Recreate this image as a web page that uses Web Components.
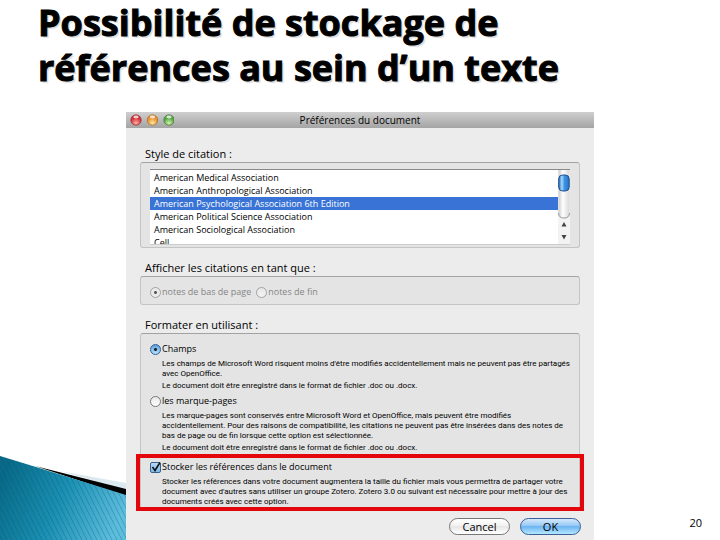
<!DOCTYPE html>
<html lang="fr">
<head>
<meta charset="utf-8">
<title>Possibilité de stockage de références</title>
<style>
  body {
    margin: 0;
    background: #fff;
    color: #000;
    font-family: "Open Sans", "Noto Sans", sans-serif;
  }
</style>
</head>
<body>
<slide-page number="20">
  <span slot="title">Possibilité de stockage de<br>références au sein d’un texte</span>
  <pref-window heading="Préférences du document">
    <pref-group heading="Style de citation :">
      <style-list></style-list>
    </pref-group>
    <pref-group heading="Afficher les citations en tant que :">
      <note-choice></note-choice>
    </pref-group>
    <pref-group heading="Formater en utilisant :">
      <pref-option type="radio" label="Champs" checked>
        <p>Les champs de Microsoft Word risquent moins d'être modifiés accidentellement mais ne peuvent pas être partagés<br>avec OpenOffice.</p>
        <p>Le document doit être enregistré dans le format de fichier .doc ou .docx.</p>
      </pref-option>
      <pref-option type="radio" label="les marque-pages">
        <p>Les marque-pages sont conservés entre Microsoft Word et OpenOffice, mais peuvent être modifiés<br>accidentellement. Pour des raisons de compatibilité, les citations ne peuvent pas être insérées dans des notes de<br>bas de page ou de fin lorsque cette option est sélectionnée.</p>
        <p>Le document doit être enregistré dans le format de fichier .doc ou .docx.</p>
      </pref-option>
      <pref-option type="checkbox" label="Stocker les références dans le document" checked framed>
        <p>Stocker les références dans votre document augmentera la taille du fichier mais vous permettra de partager votre<br>document avec d'autres sans utiliser un groupe Zotero. Zotero 3.0 ou suivant est nécessaire pour mettre à jour des<br>documents créés avec cette option.</p>
      </pref-option>
    </pref-group>
    <aqua-button slot="actions">Cancel</aqua-button>
    <aqua-button slot="actions" primary>OK</aqua-button>
  </pref-window>
</slide-page>

<script>
// look of the round and square tick controls, shared by several elements
const controlStyle = `
  input {
    appearance: none;
    flex: none;
    box-sizing: border-box;
    width: 11px;
    height: 11px;
    margin: 0;
    border: 1px solid #777;
    background: linear-gradient(#e8e8e8, #fff);
  }
  input[type="radio"] {
    border-radius: 50%;
  }
  input[type="radio"]:checked {
    border-color: #2b5f94;
    background: radial-gradient(circle, #123 0 1px, transparent 2px), linear-gradient(#5d9ddb, #b9e2fb);
  }
  input[type="checkbox"] {
    border-color: #37618c;
    border-radius: 2px;
    background: linear-gradient(#b8d8f5, #7db9ec);
  }
  input:disabled {
    opacity: 0.6;
  }
  input[type="radio"]:disabled:checked {
    border-color: #777;
    background: radial-gradient(circle, #000 0 1px, transparent 2px), #eee;
  }
`;

class SlidePage extends HTMLElement {
  constructor() {
    super();
    this.shadowDOM = this.attachShadow({ mode: "open" });
  }

  connectedCallback() {
    this.shadowDOM.innerHTML = `
      <style>
        :host {
          display: grid;
          grid-template-columns: minmax(0, 7fr) minmax(0, 26fr) minmax(0, 7fr);
          grid-template-rows: 112px 1fr;
          min-height: 100vh;
        }
        h1 {
          grid-column: 1 / -1;
          margin: 0;
          padding-left: 38px;
          font-size: 36px;
          line-height: 45px;
          font-weight: 700;
          white-space: nowrap;
          -webkit-text-stroke: 1px #000;
          text-shadow: 2px 2px 1px #ddd;
        }
        .wave {
          align-self: end;
          display: block;
          width: 100%;
        }
        footer {
          align-self: end;
          padding: 0 18px 9px 0;
          text-align: right;
          font-size: 11px;
          line-height: 16px;
        }
      </style>
      <h1><slot name="title"></slot></h1>
      <svg class="wave" viewBox="0 0 126 84" aria-hidden="true">
        <defs>
          <linearGradient id="sea" x1="0" y1="0.3" x2="1" y2="0.6">
            <stop offset="0" stop-color="#086a88"/>
            <stop offset="0.5" stop-color="#1a90b2"/>
            <stop offset="1" stop-color="#5dbddd"/>
          </linearGradient>
          <pattern id="lines" width="5" height="10" patternUnits="userSpaceOnUse">
            <path d="M0 0L5 10" stroke="#04506e" stroke-width="0.7" opacity="0.45"/>
          </pattern>
        </defs>
        <path d="M60 15L126 27V34Z" fill="#dceaf0"/>
        <path d="M35 10L126 33V40Z" fill="#000"/>
        <path d="M0 0L36 11L126 39V84H0Z" fill="url(#sea)"/>
        <path d="M0 0L36 11L126 39V84H0Z" fill="url(#lines)"/>
      </svg>
      <slot></slot>
      <footer>${this.getAttribute("number")}</footer>
    `;
  }
}

customElements.define("slide-page", SlidePage);

class PrefWindow extends HTMLElement {
  constructor() {
    super();
    this.shadowDOM = this.attachShadow({ mode: "open" });
  }

  connectedCallback() {
    this.shadowDOM.innerHTML = `
      <style>
        :host {
          display: block;
          background: #ececec;
        }
        header {
          display: grid;
          grid-template-columns: 48px 1fr 48px;
          align-items: center;
          height: 16px;
          background: linear-gradient(#cfcfcf, #a4a4a4);
        }
        .lights {
          display: block;
          width: 48px;
          height: 16px;
        }
        h2 {
          margin: 0;
          text-align: center;
          font-size: 10px;
          line-height: 16px;
          font-weight: 400;
        }
        .body {
          padding: 18px 14px 0;
        }
        .actions {
          display: flex;
          justify-content: flex-end;
          gap: 10px;
          padding: 7px 13px 5px;
        }
      </style>
      <header>
        <svg class="lights" viewBox="0 0 48 16" aria-hidden="true">
          <defs>
            <radialGradient id="red" cy="0.8"><stop offset="0" stop-color="#ffb0a8"/><stop offset="1" stop-color="#d5333a"/></radialGradient>
            <radialGradient id="amber" cy="0.8"><stop offset="0" stop-color="#ffe9a0"/><stop offset="1" stop-color="#ea9235"/></radialGradient>
            <radialGradient id="green" cy="0.8"><stop offset="0" stop-color="#d5f5b0"/><stop offset="1" stop-color="#56a545"/></radialGradient>
          </defs>
          <g stroke-width="0.8">
            <circle cx="10" cy="8" r="5.2" fill="url(#red)" stroke="#9c3438"/>
            <circle cx="26.5" cy="8" r="5.2" fill="url(#amber)" stroke="#a8702f"/>
            <circle cx="43" cy="8" r="5.2" fill="url(#green)" stroke="#4b7f40"/>
          </g>
          <g fill="#fff" opacity="0.75">
            <ellipse cx="10" cy="5" rx="2.6" ry="1.4"/>
            <ellipse cx="26.5" cy="5" rx="2.6" ry="1.4"/>
            <ellipse cx="43" cy="5" rx="2.6" ry="1.4"/>
          </g>
        </svg>
        <h2>${this.getAttribute("heading")}</h2>
      </header>
      <div class="body"><slot></slot></div>
      <div class="actions"><slot name="actions"></slot></div>
    `;
  }
}

customElements.define("pref-window", PrefWindow);

class PrefGroup extends HTMLElement {
  constructor() {
    super();
    this.shadowDOM = this.attachShadow({ mode: "open" });
  }

  connectedCallback() {
    this.shadowDOM.innerHTML = `
      <style>
        :host {
          display: block;
          margin-bottom: 12px;
        }
        :host(:last-of-type) {
          margin-bottom: 0;
        }
        h3 {
          margin: 0;
          padding: 0 5px;
          font-size: 11px;
          line-height: 16px;
          font-weight: 400;
        }
        .box {
          padding: 6px 9px 2px;
          border: 1px solid #c4c4c4;
          border-top-color: #a2a2a2;
          border-radius: 3px;
          background: #e4e4e4;
        }
      </style>
      <h3>${this.getAttribute("heading")}</h3>
      <div class="box"><slot></slot></div>
    `;
  }
}

customElements.define("pref-group", PrefGroup);

class StyleList extends HTMLElement {
  constructor() {
    super();
    this.shadowDOM = this.attachShadow({ mode: "open" });
  }

  connectedCallback() {
    this.shadowDOM.innerHTML = `
      <style>
        :host {
          display: flex;
          height: 74px;
          border-top: 1px solid #888;
          border-bottom: 1px solid #ccc;
          background: #fff;
        }
        select {
          flex: 1;
          min-width: 0;
          height: 74px;
          padding: 1px 0 0;
          border: 0;
          outline: 0;
          background: #fff;
          overflow: hidden;
          scrollbar-width: none;
          font: inherit;
          font-size: 9px;
        }
        option {
          min-height: 13px;
          padding: 0 4px;
          line-height: 13px;
          color: #000;
        }
        option:checked {
          background: #3973d5 linear-gradient(#3973d5, #3973d5);
          color: #fff;
          -webkit-text-fill-color: #fff;
          font-weight: 500;
        }
        svg {
          flex: none;
          width: 12px;
          height: 74px;
        }
      </style>
      <select size="6" aria-label="Style de citation">
        <option>American Medical Association</option>
        <option>American Anthropological Association</option>
        <option selected>American Psychological Association 6th Edition</option>
        <option>American Political Science Association</option>
        <option>American Sociological Association</option>
        <option>Cell</option>
      </select>
      <svg viewBox="0 0 12 74" aria-hidden="true">
        <defs>
          <linearGradient id="track"><stop offset="0" stop-color="#ccc"/><stop offset="0.4" stop-color="#fff"/><stop offset="1" stop-color="#d8d8d8"/></linearGradient>
          <linearGradient id="thumb"><stop offset="0" stop-color="#2566b8"/><stop offset="0.3" stop-color="#a8d7fa"/><stop offset="0.55" stop-color="#3b94e6"/><stop offset="1" stop-color="#2c72c4"/></linearGradient>
        </defs>
        <path d="M0 0H12V74H0Z" fill="#f3f3f3"/>
        <path d="M0.500 0H11.500V43Q11.500 48 6 48T0.500 43Z" fill="url(#track)"/>
        <path d="M0.500 43Q0.500 48 6 48T11.500 43" fill="none" stroke="#999"/>
        <rect x="0.700" y="5" width="10.500" height="16" rx="4" fill="url(#thumb)" stroke="#1e4f92"/>
        <path d="M3.500 56.500L6 52L8.500 56.500ZM3.500 65L6 69.500L8.500 65Z" fill="#444"/>
      </svg>
    `;
  }
}

customElements.define("style-list", StyleList);

class NoteChoice extends HTMLElement {
  constructor() {
    super();
    this.shadowDOM = this.attachShadow({ mode: "open" });
  }

  connectedCallback() {
    this.shadowDOM.innerHTML = `
      <style>
        :host {
          display: flex;
          gap: 5px;
          padding: 2px 0 3px;
          font-size: 9px;
          line-height: 14px;
          color: #858585;
        }
        label {
          display: flex;
          align-items: center;
          gap: 1px;
        }
        ${controlStyle}
      </style>
      <label><input type="radio" name="notes" checked disabled>notes de bas de page</label>
      <label><input type="radio" name="notes" disabled>notes de fin</label>
    `;
  }
}

customElements.define("note-choice", NoteChoice);

class PrefOption extends HTMLElement {
  constructor() {
    super();
    this.shadowDOM = this.attachShadow({ mode: "open" });
  }

  connectedCallback() {
    const type = this.getAttribute("type");
    this.shadowDOM.innerHTML = `
      <style>
        :host {
          display: block;
          position: relative;
          padding: 1px 0;
        }
        :host([framed]) {
          padding: 5px 0 1px;
        }
        /* red frame laid over the option that the slide points out */
        :host([framed])::after {
          content: "";
          position: absolute;
          inset: 0 -14px -3px;
          border: 4px solid #e3060b;
          pointer-events: none;
        }
        label {
          display: flex;
          align-items: center;
          gap: 1px;
          font-size: 9px;
          line-height: 16px;
        }
        .control {
          display: grid;
        }
        .control > * {
          grid-area: 1 / 1;
        }
        svg {
          width: 11px;
          height: 11px;
          overflow: visible;
          pointer-events: none;
        }
        ::slotted(p) {
          margin: 2px 0 0 12px;
          font-family: Roboto, "Open Sans", sans-serif;
          font-size: 8px;
          line-height: 10px;
          white-space: nowrap;
        }
        ${controlStyle}
      </style>
      <label>
        <span class="control">
          <input type="${type}" ${this.hasAttribute("checked") ? "checked" : ""}>
          ${type === "checkbox" ? `<svg viewBox="0 0 11 11"><path d="M2.5 5L5 8.5L10 0.5" fill="none" stroke="#111" stroke-width="1.6"/></svg>` : ""}
        </span>
        ${this.getAttribute("label")}
      </label>
      <slot></slot>
    `;
  }
}

customElements.define("pref-option", PrefOption);

class AquaButton extends HTMLElement {
  constructor() {
    super();
    this.shadowDOM = this.attachShadow({ mode: "open" });
  }

  connectedCallback() {
    this.shadowDOM.innerHTML = `
      <style>
        :host {
          display: block;
        }
        button {
          display: block;
          box-sizing: border-box;
          min-width: 61px;
          height: 17px;
          padding: 0 8px;
          border: 1px solid #777;
          border-radius: 9px;
          background: linear-gradient(#fff, #f0f0f0 50%, #e6e6e6 50%, #fff);
          font: inherit;
          font-size: 11px;
          line-height: 15px;
          color: #000;
        }
        :host([primary]) button {
          border-color: #3b5f96;
          background: linear-gradient(#d5e9fb, #8fc5f4 50%, #6db4f2 50%, #b5e7ff);
        }
      </style>
      <button type="button"><slot></slot></button>
    `;
  }
}

customElements.define("aqua-button", AquaButton);
</script>
</body>
</html>
